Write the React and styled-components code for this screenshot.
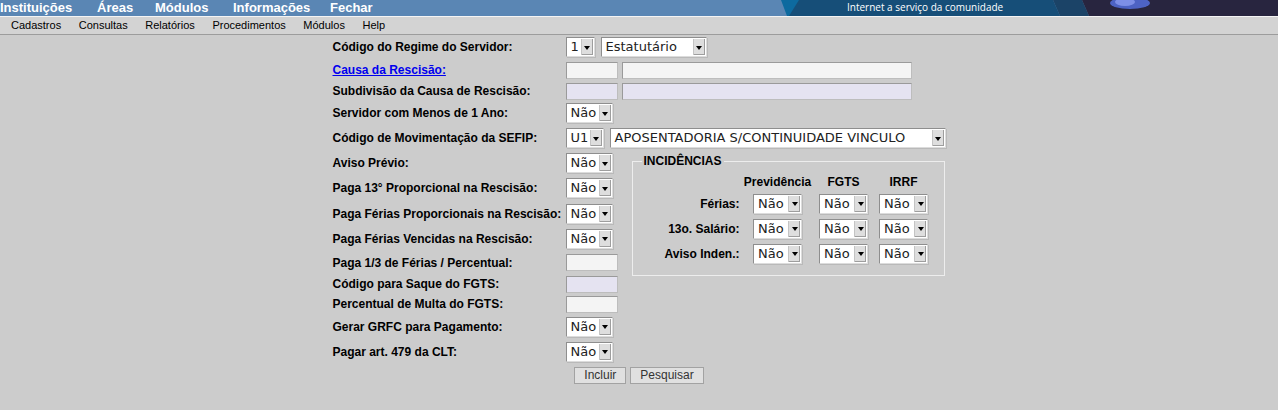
import styled, { createGlobalStyle } from "styled-components";

const GlobalStyle = createGlobalStyle`
  body {
    margin: 0;
    background: #cccccc;
    font-family: "Liberation Sans", Arial, sans-serif;
  }
`;

const TopBar = styled.div`
  display: flex;
  height: 16px;
  background: #5a86b4;
  border-bottom: 1px solid #f4f4f4;
`;

const TopItem = styled.a`
  width: ${(p) => p.$w}px;
  flex: none;
  color: #ffffff;
  font-weight: bold;
  font-size: 13px;
  line-height: 16px;
  text-decoration: none;
  white-space: nowrap;
`;

const Spacer = styled.div`
  flex: 1;
`;

const SubBar = styled.div`
  display: flex;
  gap: 17.6px;
  height: 17px;
  padding-left: 11px;
  background: #d3d3d3;
  border-bottom: 1px solid #9c9c9c;
`;

const SubItem = styled.a`
  font-size: 11px;
  line-height: 17px;
  color: #000;
  text-decoration: none;
`;

const Form = styled.div`
  display: grid;
  width: 613px;
  margin: 0 auto;
  grid-template-columns: 233px 66px 1fr;
  grid-template-rows: ${(p) => p.$rows.map((h) => `${h}px`).join(" ")};
  align-items: center;
`;

const Label = styled.div`
  grid-column: 1;
  grid-row: ${(p) => p.$row};
  font-size: 12px;
  font-weight: bold;
  color: #000;
  white-space: nowrap;
`;

const LinkLabel = styled.a`
  color: #0000ee;
  text-decoration: underline;
`;

const Controls = styled.div`
  grid-column: ${(p) => (p.$wide ? "2 / -1" : "2")};
  grid-row: ${(p) => p.$row};
  display: flex;
  gap: ${(p) => p.$gap || 5}px;
  align-items: center;
`;

const SelectBox = styled.div`
  display: flex;
  box-sizing: border-box;
  width: ${(p) => p.$w}px;
  height: ${(p) => p.$h || 20}px;
  background: #ffffff;
  border: 1px solid;
  border-color: #8e8e8e #dcdcdc #dcdcdc #8e8e8e;
  box-shadow: 1px 1px 0 #b9b9b9;
`;

const SelectText = styled.span`
  flex: 1;
  padding-left: 4px;
  font-family: "DejaVu Sans", sans-serif;
  font-size: 13px;
  line-height: 18px;
  color: #222;
  white-space: nowrap;
  overflow: hidden;
`;

const Arrow = styled.span`
  display: flex;
  align-items: center;
  justify-content: center;
  width: 11px;
  margin: 1px 1px 1px 0;
  background: #dedede;
  border-left: 1px solid #c4c4c4;
  box-shadow: inset -1px -1px 0 #9e9e9e;

  &::after {
    content: "";
    width: 0;
    height: 0;
    border-left: 3px solid transparent;
    border-right: 3px solid transparent;
    border-top: 4px solid #000;
    margin-top: 1px;
  }
`;

const Input = styled.div`
  box-sizing: border-box;
  width: ${(p) => p.$w}px;
  height: 17px;
  background: ${(p) => (p.$tint ? "#e5e3f1" : "#f4f4f4")};
  border: 1px solid;
  border-color: #9a9a9a #bdbdbd #bdbdbd #9a9a9a;
`;

const Fieldset = styled.fieldset`
  grid-column: 3;
  grid-row: 6 / 11;
  align-self: start;
  box-sizing: border-box;
  width: 313px;
  height: 123px;
  margin: 2px 0 0 0;
  padding: 4px 0 0 7px;
  border: 1px solid #ededed;
  min-width: 0;
`;

const Legend = styled.legend`
  margin-left: 2px;
  padding: 0 2px;
  font-size: 12px;
  font-weight: bold;
  line-height: 16px;
  color: #000;
`;

const IncGrid = styled.div`
  display: grid;
  grid-template-columns: 100px 68px 56px 56px;
  grid-template-rows: 18px 25px 25px 25px;
  column-gap: 4px;
  align-items: center;
  justify-items: center;
`;

const IncHead = styled.div`
  font-size: 12px;
  font-weight: bold;
  color: #000;
`;

const IncLabel = styled(IncHead)`
  justify-self: end;
  white-space: nowrap;
`;

const Buttons = styled.div`
  grid-column: 1 / -1;
  grid-row: 15;
  display: flex;
  justify-content: center;
  gap: 4px;
`;

const Button = styled.button`
  height: 17px;
  padding: 0 9px;
  font-family: "Liberation Sans", Arial, sans-serif;
  font-size: 12px;
  line-height: 15px;
  color: #333;
  background: #e0e0e0;
  border: 1px solid #a2a2a2;
`;

const Select = ({ w, h, value }) => (
  <SelectBox $w={w} $h={h}>
    <SelectText>{value}</SelectText>
    <Arrow />
  </SelectBox>
);

const Banner = () => (
  <svg width="503" height="16" viewBox="0 0 503 16">
    <polygon points="6,0 26,0 16,16 12,16" fill="#0d6a9f" />
    <polygon points="24,0 278,0 285,16 14,16" fill="#164e78" />
    <polygon points="278,0 307,0 314,16 285,16" fill="#1b4367" />
    <polygon points="307,0 503,0 503,16 314,16" fill="#28253f" />
    <ellipse cx="355" cy="3" rx="20" ry="6" fill="#4d63c4" />
    <ellipse cx="350" cy="2" rx="10" ry="4" fill="#7d8fe6" />
    <text x="72" y="11" fill="#ffffff" fontSize="10" fontFamily="'Open Sans', sans-serif">
      Internet a serviço da comunidade
    </text>
  </svg>
);

const rows = [24, 22, 20, 24, 26, 24, 26, 25, 25, 23, 20, 20, 25, 25, 22];

const incRows = ["Férias:", "13o. Salário:", "Aviso Inden.:"];

export default function App() {
  return (
    <>
      <GlobalStyle />
      <TopBar>
        <TopItem $w={97}>Instituições</TopItem>
        <TopItem $w={58}>Áreas</TopItem>
        <TopItem $w={78}>Módulos</TopItem>
        <TopItem $w={97}>Informações</TopItem>
        <TopItem $w={50}>Fechar</TopItem>
        <Spacer />
        <Banner />
      </TopBar>
      <SubBar>
        <SubItem>Cadastros</SubItem>
        <SubItem>Consultas</SubItem>
        <SubItem>Relatórios</SubItem>
        <SubItem>Procedimentos</SubItem>
        <SubItem>Módulos</SubItem>
        <SubItem>Help</SubItem>
      </SubBar>
      <Form $rows={rows}>
        <Label $row={1}>Código do Regime do Servidor:</Label>
        <Controls $row={1} $wide $gap={6}>
          <Select w={29} value="1" />
          <Select w={106} value="Estatutário" />
        </Controls>

        <Label $row={2}>
          <LinkLabel href="#">Causa da Rescisão:</LinkLabel>
        </Label>
        <Controls $row={2} $wide $gap={4}>
          <Input $w={52} />
          <Input $w={290} />
        </Controls>

        <Label $row={3}>Subdivisão da Causa de Rescisão:</Label>
        <Controls $row={3} $wide $gap={4}>
          <Input $w={52} $tint />
          <Input $w={290} $tint />
        </Controls>

        <Label $row={4}>Servidor com Menos de 1 Ano:</Label>
        <Controls $row={4} $wide>
          <Select w={47} value="Não" />
        </Controls>

        <Label $row={5}>Código de Movimentação da SEFIP:</Label>
        <Controls $row={5} $wide $gap={6}>
          <Select w={38} value="U1" />
          <Select w={336} value="APOSENTADORIA S/CONTINUIDADE VINCULO" />
        </Controls>

        <Label $row={6}>Aviso Prévio:</Label>
        <Controls $row={6}>
          <Select w={47} value="Não" />
        </Controls>

        <Label $row={7}>Paga 13° Proporcional na Rescisão:</Label>
        <Controls $row={7}>
          <Select w={47} value="Não" />
        </Controls>

        <Label $row={8}>Paga Férias Proporcionais na Rescisão:</Label>
        <Controls $row={8}>
          <Select w={47} value="Não" />
        </Controls>

        <Label $row={9}>Paga Férias Vencidas na Rescisão:</Label>
        <Controls $row={9}>
          <Select w={47} value="Não" />
        </Controls>

        <Fieldset>
          <Legend>INCIDÊNCIAS</Legend>
          <IncGrid>
            <span />
            <IncHead>Previdência</IncHead>
            <IncHead>FGTS</IncHead>
            <IncHead>IRRF</IncHead>
            {incRows.map((r) => [
              <IncLabel key={r}>{r}</IncLabel>,
              <Select key={r + "1"} w={49} value="Não" />,
              <Select key={r + "2"} w={49} value="Não" />,
              <Select key={r + "3"} w={49} value="Não" />,
            ])}
          </IncGrid>
        </Fieldset>

        <Label $row={10}>Paga 1/3 de Férias / Percentual:</Label>
        <Controls $row={10}>
          <Input $w={52} />
        </Controls>

        <Label $row={11}>Código para Saque do FGTS:</Label>
        <Controls $row={11} $wide>
          <Input $w={52} $tint />
        </Controls>

        <Label $row={12}>Percentual de Multa do FGTS:</Label>
        <Controls $row={12} $wide>
          <Input $w={52} />
        </Controls>

        <Label $row={13}>Gerar GRFC para Pagamento:</Label>
        <Controls $row={13} $wide>
          <Select w={47} value="Não" />
        </Controls>

        <Label $row={14}>Pagar art. 479 da CLT:</Label>
        <Controls $row={14} $wide>
          <Select w={47} value="Não" />
        </Controls>

        <Buttons>
          <Button>Incluir</Button>
          <Button>Pesquisar</Button>
        </Buttons>
      </Form>
    </>
  );
}
